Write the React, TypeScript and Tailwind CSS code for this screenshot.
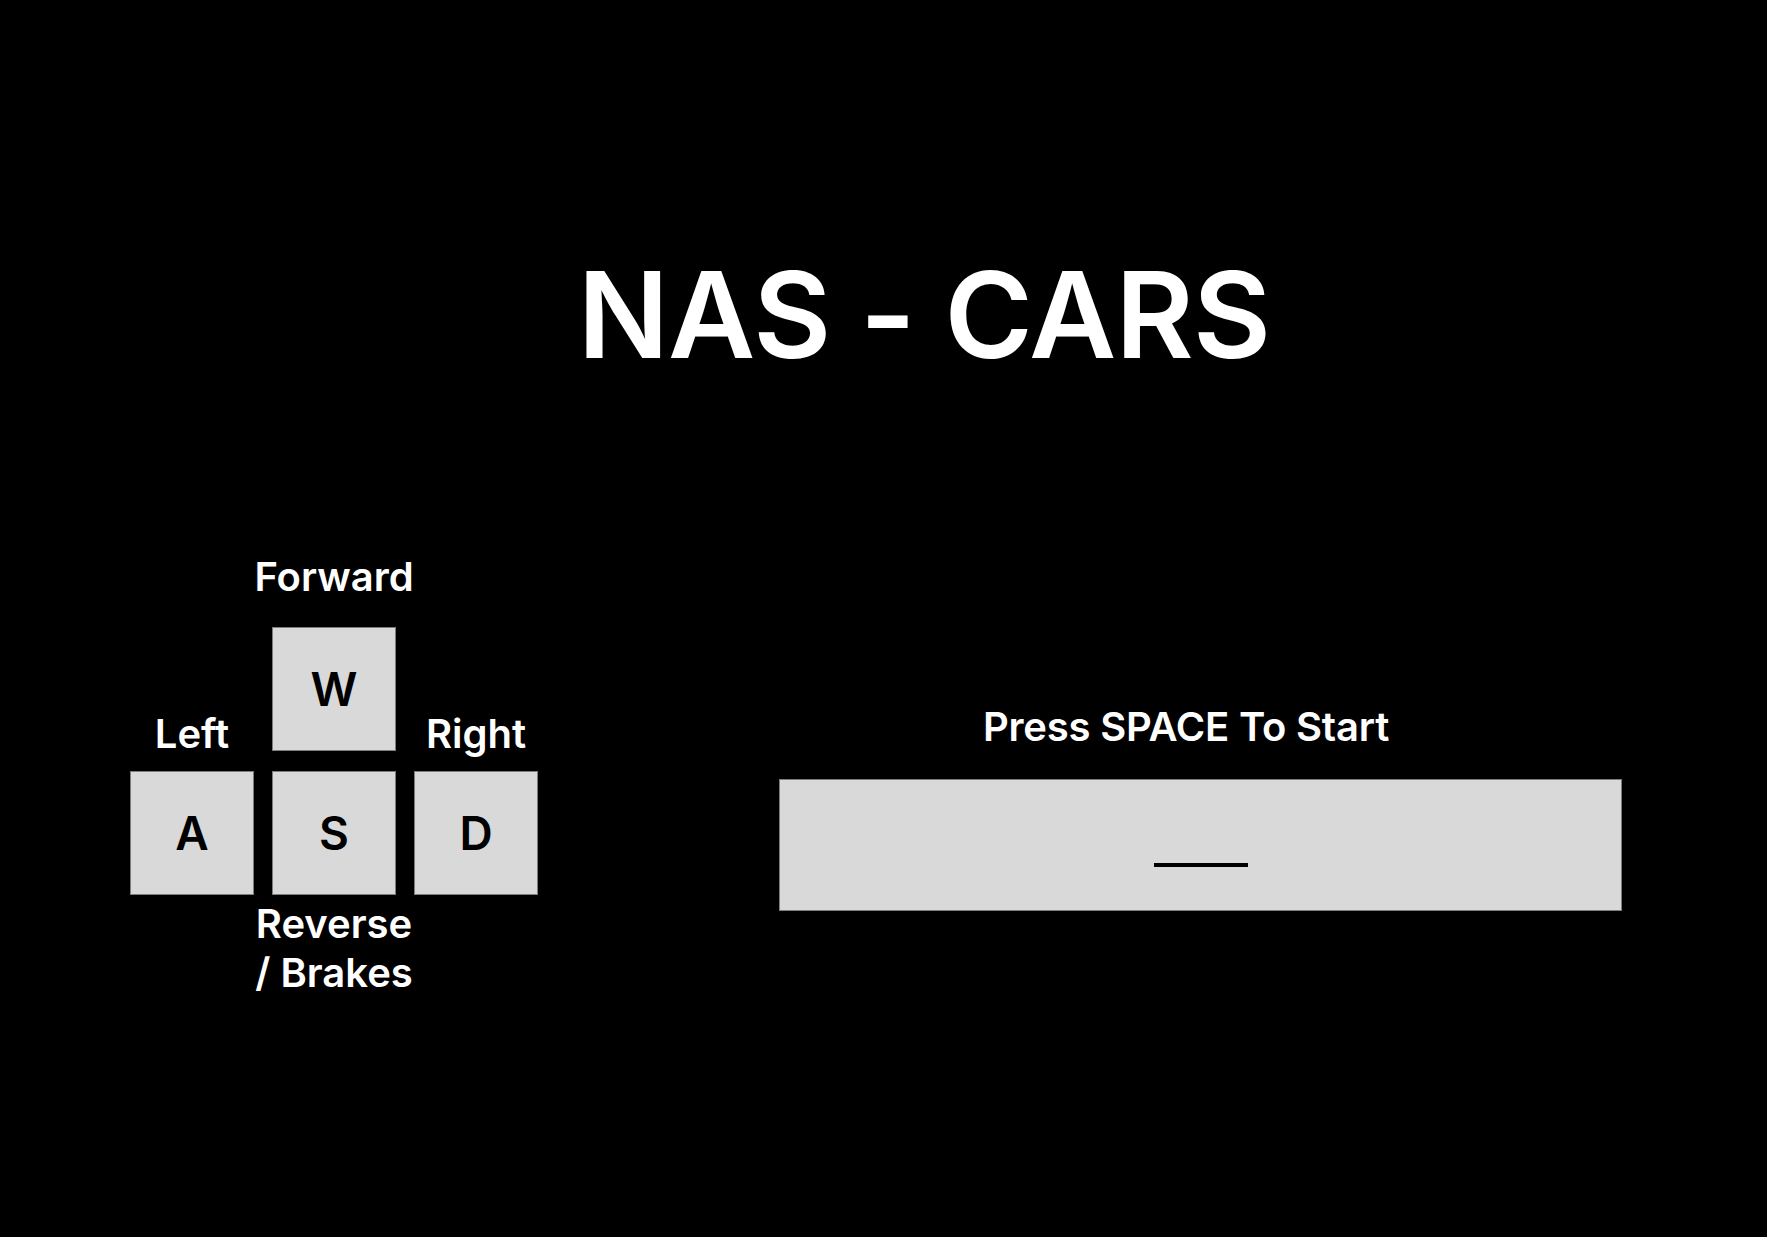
const keyBox =
  "w-[124px] h-[124px] bg-[#d9d9d9] border border-[#7c7c7c] flex items-center justify-center text-[46px] font-semibold text-black leading-none";

function Key({ letter }: { letter: string }) {
  return <div className={keyBox}>{letter}</div>;
}

function Label({ children, className = "" }: { children: React.ReactNode; className?: string }) {
  return (
    <div className={`flex justify-center whitespace-nowrap text-white text-[40px] font-semibold ${className}`}>
      {children}
    </div>
  );
}

export default function App() {
  return (
    <div
      className="w-full h-[1237px] bg-black overflow-hidden"
      style={{ fontFamily: "Inter, 'Noto Sans', sans-serif" }}
    >
      <h1 className="pt-[255px] pl-[81px] text-center text-white text-[120px] font-semibold leading-none tracking-[-0.8px]">
        NAS - CARS
      </h1>

      <div className="flex items-start pl-[130px] mt-[177px]">
        {/* WASD controls */}
        <div className="grid grid-cols-[124px_124px_124px] gap-x-[18px]">
          <div />
          <Label className="leading-[49px] mb-[26px]">Forward</Label>
          <div />

          <Label className="self-end leading-[35px]">Left</Label>
          <Key letter="W" />
          <Label className="self-end leading-[35px]">Right</Label>

          <div className="mt-[20px]">
            <Key letter="A" />
          </div>
          <div className="mt-[20px]">
            <Key letter="S" />
          </div>
          <div className="mt-[20px]">
            <Key letter="D" />
          </div>

          <div />
          <div className="mt-[4px] flex flex-col items-center">
            <Label className="leading-[49px]">Reverse</Label>
            <Label className="leading-[49px]">/ Brakes</Label>
          </div>
          <div />
        </div>

        {/* start prompt */}
        <div className="ml-[241px] mt-[151px] w-[843px] flex flex-col">
          <p className="pr-[29px] text-center text-white text-[40px] font-semibold leading-[48px] tracking-[-0.2px]">
            Press SPACE To Start
          </p>
          <div className="mt-[28px] h-[132px] bg-[#d9d9d9] border border-[#7c7c7c] flex justify-center pt-[83px]">
            <div className="w-[94px] h-[4px] bg-black" />
          </div>
        </div>
      </div>
    </div>
  );
}
